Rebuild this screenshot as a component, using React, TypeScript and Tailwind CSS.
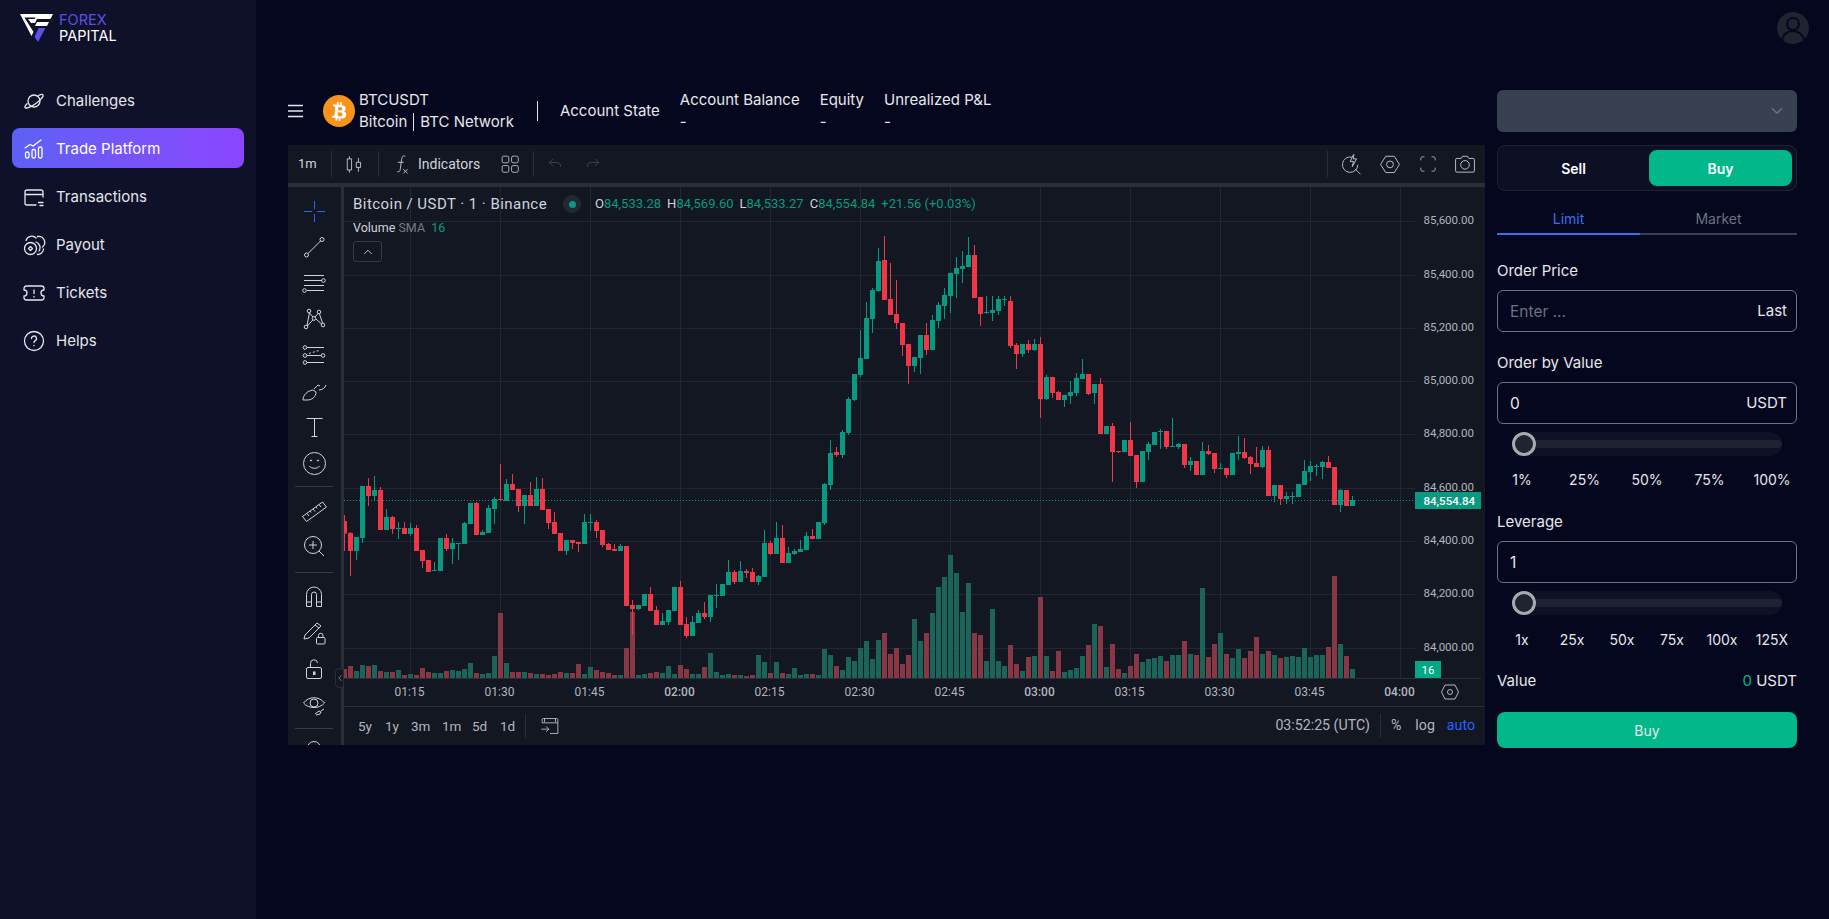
import { ChevronDown, ChevronLeft, ChevronUp } from "lucide-react";
import { FaBtc } from "react-icons/fa";
import { FC, ReactNode } from "react";

// candle rows: up, wick top, body top, body bottom, wick bottom (3x px, add offset)
type Row = [number, number, number, number, number];

const segA: Row[] = [
  [0,165,183,221,273],[0,216,219,273,348],[1,231,231,273,300],[1,78,78,234,249],[0,54,78,108,138],[1,48,90,108,123],
  [0,81,90,210,210],[1,147,171,210,210],[0,168,171,207,222],[1,186,204,207,237],[0,186,204,222,222],[1,189,204,222,228],
  [0,195,204,273,273],[0,270,270,303,324],[0,300,300,336,336],[1,306,330,333,333],[1,234,234,333,333],[0,222,234,267,273],
  [1,234,249,267,312],[1,249,249,252,300],[1,186,189,252,252],[1,129,129,192,192],[0,126,129,225,225],[1,210,216,225,225],
  [1,135,144,219,219],[1,111,117,147,192],[0,12,117,120,120],[1,57,72,123,123],[0,42,72,90,90],[0,87,87,138,156],
  [1,105,105,138,192],[0,66,105,138,138],[1,51,87,138,138],[0,54,87,150,150],[0,147,147,189,207],[0,156,186,222,222],
  [0,219,219,273,273],[1,240,240,273,285],[0,240,240,249,267],[0,246,246,252,276],[1,162,186,252,252],[1,162,186,189,213],
  [0,180,186,213,234],[0,210,210,255,261],[0,249,252,270,270],[0,252,267,273,273],[1,252,258,273,273],[0,258,258,438,438],
  [0,420,435,447,525],[1,435,435,447,450],[1,402,402,438,438],[0,381,402,453,453],[0,438,450,495,495],
];

const segB: Row[] = [
  [1,699,723,735,735],[1,690,690,726,735],[1,621,621,693,693],[0,603,621,735,735],[0,711,732,768,774],[1,708,726,768,768],
  [1,690,699,729,729],[0,666,699,711,717],[1,645,645,711,726],[1,612,645,648,684],[1,612,612,648,648],[1,540,576,615,615],
  [0,570,576,606,612],[1,543,573,606,606],[0,567,573,579,594],[0,564,576,606,606],[1,585,588,606,615],[1,450,489,591,591],
  [0,483,489,522,525],[1,426,474,522,522],[0,435,474,549,549],[1,501,519,549,549],[1,507,513,522,525],[1,480,507,516,516],
  [1,456,468,510,510],[0,447,468,477,477],[1,426,426,477,477],
];

const segC: Row[] = [
  [1,879,882,1000,1005],[1,750,789,885,900],[0,771,786,795,801],[1,720,726,795,804],[1,621,627,729,735],[1,552,552,630,633],
  [1,420,504,555,561],[1,336,384,507,507],[1,294,300,387,429],[1,174,213,303,306],[0,138,210,330,330],[0,219,327,375,375],
  [0,270,372,399,417],[0,399,399,465,498],[0,462,462,528,582],[1,501,501,528,546],[1,435,435,504,552],[0,399,435,480,495],
  [1,375,390,480,480],[1,336,345,393,414],[1,294,315,348,387],[1,249,249,318,369],[1,201,234,252,324],[1,183,228,237,279],
  [1,141,195,231,231],[0,165,195,324,324],[0,321,321,372,408],[1,318,366,369,372],[1,318,360,369,393],[1,318,327,363,375],
  [1,318,327,330,348],[0,318,333,468,474],[0,459,465,492,537],[1,462,462,492,501],[0,450,462,480,489],[1,447,462,480,483],
  [0,441,462,627,684],[1,555,561,627,630],[0,561,561,609,624],[0,603,606,630,630],[1,615,615,630,651],[1,573,606,618,642],
  [1,549,564,609,618],[1,507,552,567,567],[0,552,552,612,615],[1,582,582,609,642],[0,564,582,732,732],[1,708,708,732,732],
  [0,699,708,786,876],[0,783,783,786,789],[1,750,750,786,786],[0,696,750,798,798],[0,795,795,876,894],[1,783,783,876,876],
  [1,756,762,786,810],[1,726,726,765,765],[1,717,723,726,777],[0,723,723,771,777],[1,684,768,771,771],[1,759,762,771,777],
  [0,762,762,825,834],[1,801,813,825,843],[0,813,813,855,855],[1,756,783,855,855],[0,765,783,792,795],[0,789,789,837,849],
  [1,819,834,837,837],[0,834,834,855,864],[1,789,789,855,855],[1,738,786,792,810],[0,744,786,804,807],[0,798,801,822,852],
  [0,771,819,831,831],[1,768,780,831,834],[0,768,780,918,918],[1,885,885,918,936],[0,885,885,927,945],[1,906,918,927,942],
  [1,906,918,921,942],[1,882,882,921,921],[1,810,843,885,885],[1,813,828,846,873],[1,822,828,831,858],[1,813,816,831,867],
  [0,798,816,834,834],[0,831,831,945,945],[1,897,900,945,966],[0,900,900,948,948],[1,918,930,948,948],
];

const shift = (rows: Row[], off: number) =>
  rows.map(([u, a, b, c, d]) => ({ up: u === 1, hi: (a + off) / 3, top: (b + off) / 3, bot: (c + off) / 3, lo: (d + off) / 3 }));

const candles = [...shift(segA, 1380), ...shift(segB, 1140), ...shift(segC, 570)];

// volume heights in 3x px, first bar is t = -11
const volumes = [
  27,36,21,39,36,39,21,18,18,24,9,12,9,30,18,15,15,21,24,21,27,45,15,12,15,66,195,45,18,18,18,15,12,12,9,12,18,15,15,42,12,33,
  24,18,15,9,9,90,198,9,12,15,18,15,36,12,39,27,12,12,33,75,18,9,12,9,9,6,9,69,48,15,48,15,12,30,9,12,12,9,87,69,36,24,63,51,
  90,111,57,114,135,72,90,42,69,177,111,135,195,273,303,369,315,198,285,135,129,51,207,51,36,99,42,21,63,66,243,66,21,81,18,24,
  30,66,99,162,156,33,102,27,15,36,72,48,57,60,66,51,69,69,111,72,69,270,63,102,135,72,60,87,60,81,123,72,81,69,60,63,66,63,90,
  63,69,69,93,306,102,66,27,
];

const priceTicks: [string, number][] = [
  ["85,600.00", 221], ["85,400.00", 275], ["85,200.00", 328], ["85,000.00", 381], ["84,800.00", 434],
  ["84,600.00", 488], ["84,400.00", 541], ["84,200.00", 594], ["84,000.00", 648],
];

const timeTicks: [string, boolean][] = [
  ["01:15", false], ["01:30", false], ["01:45", false], ["02:00", true], ["02:15", false], ["02:30", false],
  ["02:45", false], ["03:00", true], ["03:15", false], ["03:30", false], ["03:45", false], ["04:00", true],
];

const Glyph: FC<{ children: ReactNode; size?: number; className?: string }> = ({ children, size = 28, className }) => (
  <svg width={size} height={size} viewBox="0 0 28 28" fill="none" stroke="currentColor" strokeWidth={1} className={className}>
    {children}
  </svg>
);

const toolGroups: ReactNode[][] = [
  [
    <g className="text-[#2962ff]"><path d="M14.5 4v8M14.5 17v8M4 14.5h8M17 14.5h8" /></g>,
    <><circle cx="6.5" cy="22" r="2" /><circle cx="22" cy="6.5" r="2" /><path d="M8 20.5 20.5 8" /></>,
    <><path d="M4 6.5h20M4 11.5h18M7 21.5h17M4 16.5h20" /><circle cx="23.5" cy="11.5" r="1.8" /><circle cx="4.5" cy="21.5" r="1.8" /></>,
    <><circle cx="9" cy="6" r="1.8" /><circle cx="19" cy="7" r="1.8" /><circle cx="14" cy="13.5" r="1.8" /><circle cx="6" cy="22" r="1.8" /><circle cx="23" cy="20" r="1.8" /><path d="m9.5 8 3.5 4M18 8.5l-3 3.5M9.5 7.5 7 20.5M12.8 15l-5.5 6M16 14l5.5 5M19.5 9l3 9" /></>,
    <><path d="M7 6.5h17M7 14.5h14M7 21.5h17" /><circle cx="5" cy="6.5" r="1.8" /><circle cx="5" cy="14.5" r="1.8" /><circle cx="23" cy="14.5" r="1.8" /><circle cx="5" cy="21.5" r="1.8" /><path d="M9 12.5l10-3" strokeDasharray="2 2" /></>,
    <path d="M3 23c0-5 4-9 10-10l3 2c0 5-4 8-9 8H3ZM14 12l4-4 2 1M19 13c3 0 6-2 7-5" />,
    <path d="M6.500 5.500h16M14.500 5.500v18M11.500 23.500h6" />,
    <><circle cx="14.5" cy="14.5" r="11" /><path d="M9.5 17c1.500 3 8.500 3 10 0" /><circle cx="11" cy="11.500" r=".6" fill="currentColor" /><circle cx="18" cy="11.500" r=".6" fill="currentColor" /></>,
  ],
  [
    <path d="m2.500 20.500 20-14.500 4 5-20 14.500-4-5ZM7 17.500l2 2.500M10 15l1 1.500M13 13l2 2.500M16 11l1 1.500M19 8.500l2 2.500" />,
    <><circle cx="13" cy="13" r="8.500" /><path d="M13 9v8M9 13h8M19 19l5 5" /></>,
  ],
  [
    <path d="M6.500 24.500v-12a7.500 7.500 0 0 1 15 0v12h-5v-12a2.500 2.500 0 0 0-5 0v12h-5ZM6.500 20h5M16.500 20h5" />,
    <><path d="m4 21 1-4L17 5l4 3L9 20l-5 1ZM15 7l4 3" /><rect x="16.500" y="19.500" width="8.500" height="6.500" rx="1" /><path d="M18.500 19.500v-2a2.200 2.200 0 0 1 4.500 0v2" /></>,
    <><rect x="6.500" y="13.500" width="15" height="11" rx="1.500" /><path d="M10.500 13.500v-4a3.500 3.500 0 0 1 7-.5" /><rect x="13.500" y="18" width="1.500" height="2.500" fill="currentColor" /></>,
    <><path d="M3.500 13c5-7 16-7 21 0-5 6-16 6-21 0Z" /><circle cx="14" cy="13" r="4" /><path d="M15 24l4-3 2 1-1 2-4 1M21 21l3-2" /></>,
  ],
];

const TopDivider: FC = () => <div className="h-[26px] w-px bg-[#2a2e39]" />;

const NavGlyph: FC<{ children: ReactNode }> = ({ children }) => (
  <svg width={24} height={24} viewBox="0 0 24 24" fill="none" stroke="currentColor" strokeWidth={1.3} strokeLinecap="round" strokeLinejoin="round">
    {children}
  </svg>
);

const navItems: { label: string; icon: ReactNode; active?: boolean }[] = [
  {
    label: "Challenges",
    icon: <NavGlyph><circle cx="12" cy="12" r="6" /><path d="M16.500 6.500c2.300-1.200 4-1.300 4.500-.6.900 1.300-2.500 5.300-7.500 8.900-5 3.500-9.500 5-10.500 3.700-.5-.7.400-2.200 2-3.800" /></NavGlyph>,
  },
  {
    label: "Trade Platform",
    active: true,
    icon: <NavGlyph><rect x="3.500" y="15" width="3.500" height="6" rx="1.500" /><rect x="10" y="12.500" width="3.500" height="8.500" rx="1.500" /><rect x="16.500" y="10" width="3.500" height="11" rx="1.500" /><path d="m3 11 5-3.500 3 1.500 8-6" /></NavGlyph>,
  },
  {
    label: "Transactions",
    icon: <NavGlyph><path d="M21 12V7a2 2 0 0 0-2-2H5a2 2 0 0 0-2 2v11a2 2 0 0 0 2 2h9M3 9.500h18M16.500 17.500H21M18 20.500h3" /></NavGlyph>,
  },
  {
    label: "Payout",
    icon: <NavGlyph><circle cx="8.500" cy="15.500" r="6" /><path d="M8.500 13.500l2 2-2 2-2-2 2-2ZM4 7.500A6 6 0 0 1 14 5M15.500 3.500a6 6 0 0 1 5 10.500M21.500 16a6 6 0 0 1-6 5.500M14 9a6 6 0 0 1 3 9" /></NavGlyph>,
  },
  {
    label: "Tickets",
    icon: <NavGlyph><path d="M4.500 5h15A2.500 2.500 0 0 1 22 7.500V9a3 3 0 0 0 0 6v1.500a2.500 2.500 0 0 1-2.500 2.500h-15A2.500 2.500 0 0 1 2 16.500V15a3 3 0 0 0 0-6V7.500A2.500 2.500 0 0 1 4.500 5ZM12 9v3.500M12 15.500v.5" /></NavGlyph>,
  },
  {
    label: "Helps",
    icon: <NavGlyph><circle cx="12" cy="12" r="9.500" /><path d="M9.500 9.500a2.500 2.500 0 1 1 3.500 2.300c-.7.300-1 .8-1 1.700M12 16.500v.2" /></NavGlyph>,
  },
];

const Sidebar: FC = () => (
  <aside className="flex h-screen w-[256px] shrink-0 flex-col bg-[#0f1029] px-3">
    <div className="flex h-[80px] items-start gap-[6px] pl-2 pt-[12px]">
      <svg width={33} height={32} viewBox="0 0 33 32" className="shrink-0">
        <path d="M0 2h33l-2.500 5H17l-2 4h-4L8 7h6.500l1-1.500H4.500L13.500 20 11.500 24 0 2Z" fill="#ffffff" />
        <path d="M17 10h12l-2 4h-12l2-4Z" fill="#ffffff" />
        <path d="M18.500 16h7L18 30l-3.500-5 4-9Z" fill="#5b50e8" />
      </svg>
      <div className="text-[14.5px] leading-[16px]">
        <div className="text-[#5b50e8]">FOREX</div>
        <div className="text-white">PAPITAL</div>
      </div>
    </div>
    <nav className="flex flex-col gap-2">
      {navItems.map((item) => (
        <div
          key={item.label}
          className={
            item.active
              ? "flex h-10 items-center gap-[10px] rounded-lg bg-gradient-to-r from-[#5c60f5] to-[#8b45ff] px-[10px] pt-[2px] text-[15px] text-white"
              : "flex h-10 items-center gap-[10px] rounded-lg px-[10px] pt-[2px] text-[15px] text-[#e5e7eb]"
          }
        >
          {item.icon}
          <span>{item.label}</span>
        </div>
      ))}
    </nav>
  </aside>
);

const StatColumn: FC<{ label: string }> = ({ label }) => (
  <div className="leading-[22px]">
    <div>{label}</div>
    <div>-</div>
  </div>
);

const SymbolHeader: FC = () => (
  <div className="flex h-[42px] items-center text-[15px] text-[#e5e7eb]">
    <svg width={16} height={14} viewBox="0 0 16 14" fill="none" stroke="currentColor" strokeWidth={1.700} className="shrink-0">
      <path d="M0 1.500h15M0 7h15M0 12.500h15" />
    </svg>
    <div className="ml-[19px] flex size-8 items-center justify-center rounded-full bg-[#f7931a] text-white">
      <FaBtc size={19} className="rotate-[5deg]" />
    </div>
    <div className="ml-[4px] leading-[22px]">
      <div>BTCUSDT</div>
      <div className="flex items-center">
        Bitcoin
        <span className="mx-[6px] h-[18px] w-px bg-[#e5e7eb]" />
        BTC Network
      </div>
    </div>
    <div className="ml-[23px] h-[20px] w-px bg-[#e5e7eb]" />
    <div className="ml-[22px]">Account State</div>
    <div className="ml-[20px] flex gap-5">
      <StatColumn label="Account Balance" />
      <StatColumn label="Equity" />
      <StatColumn label="Unrealized P&L" />
    </div>
  </div>
);

const TopBar: FC = () => (
  <div className="flex h-[38px] items-center justify-between text-[13px] text-[#d1d4dc]">
    <div className="flex items-center">
      <span className="ml-[10px] w-[33px]">1m</span>
      <TopDivider />
      <Glyph size={24} className="mx-[11px]">
        <path d="M7.500 5v3M7.500 21v3M18 7v5M18 18v5M5 8h5v13H5zM15.500 12H20.500v6H15.500z" />
      </Glyph>
      <TopDivider />
      <Glyph size={24} className="ml-[11px]">
        <path d="M18 5c-3-1.500-4 .5-4.500 4l-1.500 11c-.5 3-1.500 3.500-3.500 3M9 12h7M15.500 20l5 5M20.500 20l-5 5" />
      </Glyph>
      <span className="ml-[4px] w-[81px] text-[14px]">Indicators</span>
      <Glyph size={22}>
        <rect x="4" y="4" width="8.500" height="8.500" rx="2" />
        <rect x="16" y="4" width="8.500" height="8.500" rx="2" />
        <rect x="4" y="16" width="8.500" height="8.500" rx="2" />
        <rect x="16" y="16" width="8.500" height="8.500" rx="2" />
      </Glyph>
      <div className="ml-[12px]"><TopDivider /></div>
      <Glyph size={20} className="ml-[11px] text-[#50535e]">
        <path d="M11 7 6 12l5 5M6 12h11c3 0 5 2 5 6" />
      </Glyph>
      <Glyph size={20} className="ml-[18px] text-[#50535e]">
        <path d="m17 7 5 5-5 5M22 12H11c-3 0-5 2-5 6" />
      </Glyph>
    </div>
    <div className="flex items-center pr-[8px]">
      <TopDivider />
      <Glyph size={24} className="ml-[11px]">
        <path d="M15 6a9 9 0 1 0 7 9M17 3l-4 8h4l-1.500 6 5-9h-4l1-5ZM19 20l6 6" />
      </Glyph>
      <Glyph size={24} className="ml-[15px]">
        <path d="M9 5h10l6 9.500-6 9.500H9L3 14.500 9 5Z" />
        <circle cx="14" cy="14.500" r="4" />
      </Glyph>
      <Glyph size={20} className="ml-[16px]">
        <path d="M9 4H6a2 2 0 0 0-2 2v3M19 4h3a2 2 0 0 1 2 2v3M9 24H6a2 2 0 0 1-2-2v-3M19 24h3a2 2 0 0 0 2-2v-3" />
      </Glyph>
      <Glyph size={24} className="ml-[15px]">
        <path d="M3 9a1.500 1.500 0 0 1 1.500-1.500h5L11 5h6l1.500 2.500h5A1.500 1.500 0 0 1 25 9v13a1.500 1.500 0 0 1-1.500 1.500h-19A1.500 1.500 0 0 1 3 22V9Z" />
        <circle cx="14" cy="15" r="5" />
      </Glyph>
    </div>
  </div>
);

const DrawingTools: FC = () => (
  <div className="relative flex w-[56px] shrink-0 flex-col items-center overflow-hidden border-r-[3px] border-[#2a2e39] pr-[2px] pt-[6px] text-[#d1d4dc]">
    {toolGroups[0].map((g, i) => (
      <div key={i} className="flex h-9 shrink-0 items-center justify-center"><Glyph>{g}</Glyph></div>
    ))}
    <div className="my-[5px] h-px w-[38px] shrink-0 bg-[#363a45]" />
    {toolGroups[1].map((g, i) => (
      <div key={i} className="flex h-9 shrink-0 items-center justify-center"><Glyph>{g}</Glyph></div>
    ))}
    <div className="mb-[5px] mt-[8px] h-px w-[38px] shrink-0 bg-[#363a45]" />
    {toolGroups[2].map((g, i) => (
      <div key={i} className="flex h-9 shrink-0 items-center justify-center"><Glyph>{g}</Glyph></div>
    ))}
    <div className="mb-[12px] mt-[6px] h-px w-[38px] shrink-0 bg-[#363a45]" />
    <div className="h-2 w-[14px] shrink-0 rounded-t-full border border-[#d1d4dc]" />
  </div>
);

const PriceChart: FC = () => {
  const clipId = "chart-clip";
  return (
    <svg width={1141} height={519} viewBox="344 187 1141 519" className="block [font-family:Roboto,sans-serif]">
      <defs>
        <clipPath id={clipId}><rect x="344" y="187" width="1071" height="519" /></clipPath>
      </defs>
      {priceTicks.map(([, y]) => (
        <rect key={y} x={344} y={y} width={1071} height={1} fill="#232733" />
      ))}
      {timeTicks.map((_, i) => (
        <rect key={i} x={410 + i * 90} y={187} width={1} height={491} fill="#232733" />
      ))}
      <g clipPath={`url(#${clipId})`}>
        {volumes.map((h, i) => (
          <rect key={i} x={342 + i * 6} y={678 - h / 3} width={5} height={h / 3} fill={candles[i].up ? "#1c6358" : "#883744"} />
        ))}
        {candles.map((c, i) => (
          <g key={i} fill={c.up ? "#089981" : "#f23645"}>
            <rect x={344 + i * 6} y={c.hi} width={1} height={c.lo - c.hi} />
            <rect x={342 + i * 6} y={c.top} width={5} height={c.bot - c.top} />
          </g>
        ))}
      </g>
      <line x1={344} x2={1415} y1={500.5} y2={500.5} stroke="#089981" strokeDasharray="1 2" />
      <rect x={344} y={678} width={1137} height={1} fill="#2a2e39" />
      {priceTicks.map(([label, y]) => (
        <text key={y} x={1474} y={y + 3} textAnchor="end" fontSize={11.500} fill="#b2b5be">{label}</text>
      ))}
      <rect x={1415} y={492} width={66} height={17} fill="#089981" />
      <text x={1475} y={504.500} textAnchor="end" fontSize={11.500} fontWeight={500} fill="#ffffff">84,554.84</text>
      <rect x={1415} y={661} width={26} height={17} fill="#00a885" />
      <text x={1428} y={674} textAnchor="middle" fontSize={11.500} fill="#ffffff">16</text>
      <g clipPath={`url(#${clipId})`}>
        {timeTicks.map(([label, bold], i) => (
          <text key={label} x={409.500 + i * 90} y={696} textAnchor="middle" fontSize={12} fontWeight={bold ? 500 : 400} fill="#b2b5be">{label}</text>
        ))}
      </g>
      <g fill="none" stroke="#b2b5be">
        <path d="M1445 685h10l3.500 7-3.500 7h-10l-3.500-7 3.500-7Z" />
        <circle cx={1450} cy={692} r={2.500} />
      </g>
    </svg>
  );
};

const Legend: FC = () => (
  <div className="absolute left-[9px] top-[8px] [font-family:Roboto,sans-serif] text-[#d1d4dc]">
    <div className="flex h-[18px] items-center">
      <span className="w-[210px] text-[15px] tracking-[0.45px]">Bitcoin / USDT · 1 · Binance</span>
      <span className="flex size-[18px] items-center justify-center rounded-full bg-[#242833]">
        <span className="size-[7px] rounded-full bg-[#089981]" />
      </span>
      <span className="ml-[14px] flex gap-[6px] text-[13px]">
        <span>O<span className="text-[#089981]">84,533.28</span></span>
        <span>H<span className="text-[#089981]">84,569.60</span></span>
        <span>L<span className="text-[#089981]">84,533.27</span></span>
        <span>C<span className="text-[#089981]">84,554.84</span></span>
        <span className="text-[#089981]">+21.56 (+0.03%)</span>
      </span>
    </div>
    <div className="mt-[7px] text-[12.5px] leading-[16px]">
      Volume <span className="text-[#787b86]">SMA</span> <span className="ml-[3px] text-[#089981]">16</span>
    </div>
    <div className="mt-[5px] flex h-[21px] w-[29px] items-center justify-center rounded-[3px] border border-[#363a45]">
      <ChevronUp size={14} strokeWidth={1.500} />
    </div>
  </div>
);

const BottomBar: FC = () => (
  <div className="flex h-[39px] items-center justify-between border-t border-[#2a2e39] pl-[14px] pr-[10px] [font-family:Roboto,sans-serif] text-[13.5px] text-[#b2b5be]">
    <div className="flex items-center">
      <span className="w-[27px]">5y</span>
      <span className="w-[26px]">1y</span>
      <span className="w-[31px]">3m</span>
      <span className="w-[30px]">1m</span>
      <span className="w-[28px]">5d</span>
      <span className="w-[25px]">1d</span>
      <div className="h-[24px] w-px bg-[#2a2e39]" />
      <Glyph size={22} className="ml-[13px] text-[#d1d4dc]">
        <path d="M7 9V4M21 9V4M4 10V6a1.500 1.500 0 0 1 1.500-1.500h17A1.500 1.500 0 0 1 24 6v17.500H14M4 10h20M3 18h9M9 14.500l3.500 3.500L9 21.500" />
      </Glyph>
    </div>
    <div className="flex items-center text-[14.2px]">
      <span>03:52:25 (UTC)</span>
      <div className="ml-[10px] h-[24px] w-px bg-[#2a2e39]" />
      <span className="ml-[10px]">%</span>
      <span className="ml-[14px]">log</span>
      <span className="ml-[12px] text-[#2962ff]">auto</span>
    </div>
  </div>
);

const ChartPanel: FC = () => (
  <div className="flex h-[600px] flex-col bg-[#131722] [font-family:Roboto,sans-serif]">
    <TopBar />
    <div className="h-1 shrink-0 bg-[#2a2e39]" />
    <div className="relative flex min-h-0 flex-1">
      <DrawingTools />
      <div className="relative flex min-w-0 flex-1 flex-col">
        <PriceChart />
        <Legend />
        <BottomBar />
      </div>
      <div className="absolute left-[47px] top-[481px] flex h-[20px] w-[9px] items-center justify-center rounded-[4px] border border-[#2a2e39] bg-[#131722] text-[#b2b5be]">
        <ChevronLeft size={10} strokeWidth={1.500} className="shrink-0" />
      </div>
    </div>
  </div>
);

const Field: FC<{ value?: string; placeholder?: string; suffix?: string }> = ({ value, placeholder, suffix }) => (
  <div className="flex h-[42px] items-center rounded-md border border-[#6b7280] pl-[12px] pr-[9px] pt-[1px] text-[15.5px]">
    <input
      readOnly
      value={value ?? ""}
      placeholder={placeholder}
      className="min-w-0 flex-1 bg-transparent text-[#e5e7eb] outline-none placeholder:text-[#6b7280]"
    />
    {suffix && <span className="text-[15px] text-[#e5e7eb]">{suffix}</span>}
  </div>
);

const Slider: FC = () => (
  <div className="ml-[15px] mt-2 flex h-6 w-[270px] items-center rounded-full bg-[#0f1226]">
    <div className="size-6 shrink-0 rounded-full border-[3px] border-[#a9a9b2] bg-[#1f2430]" />
    <div className="h-2 flex-1 rounded-r-full bg-[#1e2232]" />
  </div>
);

const Ticks: FC<{ items: string[]; className: string }> = ({ items, className }) => (
  <div className={className}>
    {items.map((t) => (
      <span key={t} className="w-[50px] text-center">{t}</span>
    ))}
  </div>
);

const OrderForm: FC = () => (
  <div className="flex w-[300px] shrink-0 flex-col text-[#e5e7eb]">
    <div className="flex h-[42px] items-center justify-end rounded-md bg-[#374151] pr-[11px] text-[#6b7280]">
      <ChevronDown size={18} strokeWidth={2} />
    </div>
    <div className="mt-[13px] flex h-[46px] items-center rounded-lg border border-[#1f2233] bg-[#0d1024] p-1 text-[14px] font-semibold">
      <div className="flex-1 pr-[4px] text-center text-white">Sell</div>
      <div className="flex h-[36px] w-[143px] items-center justify-center rounded-lg bg-[#02b78a] text-white">Buy</div>
    </div>
    <div className="mt-[14px] flex h-[30px] text-[14px]">
      <div className="w-[143px] border-b-2 border-[#3b6fe8] pb-[2px] text-center leading-[28px] text-[#3b6fe8]">Limit</div>
      <div className="flex-1 border-b-2 border-[#374151] text-center leading-[28px] text-[#6b7280]">Market</div>
    </div>
    <div className="mt-[26px] h-5 text-[15px] leading-5">Order Price</div>
    <div className="mt-[9px]"><Field placeholder="Enter ..." suffix="Last" /></div>
    <div className="mt-[21px] h-5 text-[15px] leading-5">Order by Value</div>
    <div className="mt-[9px]"><Field value="0" suffix="USDT" /></div>
    <Slider />
    <Ticks
      items={["1%", "25%", "50%", "75%", "100%"]}
      className="mt-[13px] flex h-5 items-center justify-between text-[14px] text-[#e5e7eb]"
    />
    <div className="mt-[23px] h-5 text-[15px] leading-5">Leverage</div>
    <div className="mt-[9px]"><Field value="1" /></div>
    <Slider />
    <Ticks
      items={["1x", "25x", "50x", "75x", "100x", "125X"]}
      className="mt-[14px] flex h-5 items-center justify-between text-[14px] text-[#e5e7eb]"
    />
    <div className="mt-[22px] flex h-5 items-center justify-between text-[15px]">
      <span>Value</span>
      <span><span className="text-[#02b78a]">0</span> USDT</span>
    </div>
    <div className="mt-[21px] flex h-9 items-center justify-center rounded-lg bg-[#02b78a] text-[14px] text-[#e5e7eb]">Buy</div>
  </div>
);

export default function App() {
  return (
    <div className="flex min-h-screen bg-[#05071f] [font-family:Inter,sans-serif]">
      <Sidebar />
      <main className="flex min-w-0 flex-1 flex-col">
        <div className="flex h-[90px] justify-end pr-5 pt-3">
          <div className="size-8 overflow-hidden rounded-full bg-[#1f2430] text-[#05071f]">
            <svg width={32} height={32} viewBox="0 0 32 32" fill="none" stroke="currentColor" strokeWidth={2}>
              <circle cx="16" cy="12" r="6" />
              <path d="M5 28c1-6 6-9 11-9s10 3 11 9" />
            </svg>
          </div>
        </div>
        <div className="flex gap-3 px-8">
          <div className="min-w-0 flex-1">
            <SymbolHeader />
            <div className="mt-[13px]"><ChartPanel /></div>
          </div>
          <OrderForm />
        </div>
      </main>
    </div>
  );
}
